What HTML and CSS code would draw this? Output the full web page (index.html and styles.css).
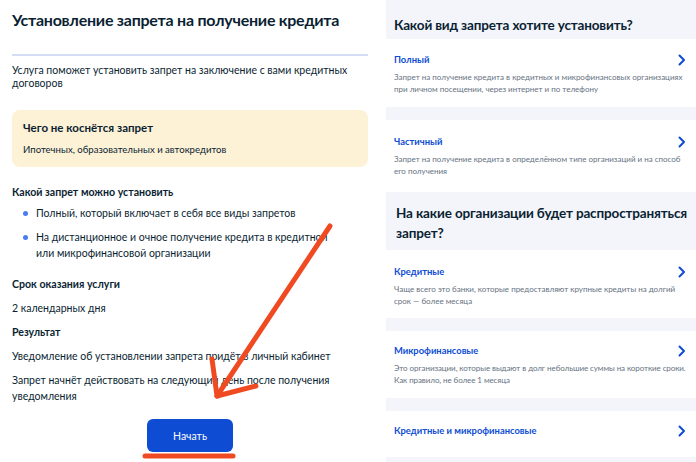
FILE: index.html
```html
<!DOCTYPE html>
<html lang="ru">
<head>
<meta charset="utf-8">
<title>Установление запрета на получение кредита</title>
<link rel="stylesheet" href="styles.css">
</head>
<body>
<div class="page">
  <section class="left">
    <h1 class="title">Установление запрета на получение кредита</h1>
    <div class="divider"></div>
    <p class="intro">Услуга поможет установить запрет на заключение с вами кредитных договоров</p>
    <div class="note">
      <div class="note-title">Чего не коснётся запрет</div>
      <div class="note-text">Ипотечных, образовательных и автокредитов</div>
    </div>
    <div class="label label-first">Какой запрет можно установить</div>
    <ul class="bullets">
      <li>Полный, который включает в себя все виды запретов</li>
      <li>На дистанционное и очное получение кредита в кредитной или микрофинансовой организации</li>
    </ul>
    <div class="label label-term">Срок оказания услуги</div>
    <p class="text">2 календарных дня</p>
    <div class="label">Результат</div>
    <p class="text">Уведомление об установлении запрета придёт в личный кабинет</p>
    <p class="text">Запрет начнёт действовать на следующий день после получения уведомления</p>
    <div class="actions">
      <button class="btn">Начать</button>
    </div>
  </section>
  <div class="spacer"></div>
  <section class="right">
    <h2 class="rtitle rtitle-first">Какой вид запрета хотите установить?</h2>
    <div class="card card-a">
      <div class="card-head"><span class="card-title">Полный</span><svg class="chev" viewBox="0 0 8 12"><path d="M1.5 1.5 L6 6 L1.5 10.5" /></svg></div>
      <div class="card-desc">Запрет на получение кредита в кредитных и микрофинансовых организациях при личном посещении, через интернет и по телефону</div>
    </div>
    <div class="card card-b">
      <div class="card-head"><span class="card-title">Частичный</span><svg class="chev" viewBox="0 0 8 12"><path d="M1.5 1.5 L6 6 L1.5 10.5" /></svg></div>
      <div class="card-desc">Запрет на получение кредита в определённом типе организаций и на способ его получения</div>
    </div>
    <h2 class="rtitle rtitle-second">На какие организации будет распространяться запрет?</h2>
    <div class="card card-c">
      <div class="card-head"><span class="card-title">Кредитные</span><svg class="chev" viewBox="0 0 8 12"><path d="M1.5 1.5 L6 6 L1.5 10.5" /></svg></div>
      <div class="card-desc">Чаще всего это банки, которые предоставляют крупные кредиты на долгий срок — более месяца</div>
    </div>
    <div class="card card-d">
      <div class="card-head"><span class="card-title">Микрофинансовые</span><svg class="chev" viewBox="0 0 8 12"><path d="M1.5 1.5 L6 6 L1.5 10.5" /></svg></div>
      <div class="card-desc card-desc-wide">Это организации, которые выдают в долг небольшие суммы на короткие сроки. Как правило, не более 1 месяца</div>
    </div>
    <div class="card card-e">
      <div class="card-head"><span class="card-title">Кредитные и микрофинансовые</span><svg class="chev" viewBox="0 0 8 12"><path d="M1.5 1.5 L6 6 L1.5 10.5" /></svg></div>
    </div>
  </section>
  <svg class="annot" viewBox="0 0 696 462" width="696" height="462">
    <g stroke="#f04a22" stroke-width="5" stroke-linecap="round" stroke-linejoin="round" fill="none">
      <path d="M330 226 L217 396" />
      <path d="M212 359 L217 396 L256 386" />
      <path d="M145 456 L233 456" />
    </g>
  </svg>
</div>
</body>
</html>
```

FILE: styles.css
```css
* { box-sizing: border-box; }
html, body { margin: 0; padding: 0; }
body {
  width: 696px;
  height: 462px;
  overflow: hidden;
  background: #ffffff;
  font-family: Lato, "Noto Sans", sans-serif;
  color: #0b1f33;
}
.page {
  position: relative;
  display: flex;
  width: 696px;
  height: 462px;
}
.left {
  width: 380px;
  flex: 0 0 380px;
  padding: 0 12px;
  display: flex;
  flex-direction: column;
}
.title {
  margin: 8px 0 0;
  font-size: 16px;
  letter-spacing: -0.25px;
  line-height: 24px;
  font-weight: 700;
  color: #0b1f33;
  white-space: nowrap;
}
.divider {
  margin-top: 22px;
  height: 2px;
  background: #d2ddf3;
}
.intro {
  margin: 8px 0 0;
  font-size: 10.5px;
  line-height: 13px;
  color: #0b1f33;
}
.note {
  margin-top: 20px;
  background: #fdf1d6;
  border-radius: 8px;
  padding: 10px 11px 9px;
}
.note-title {
  font-size: 11.5px;
  line-height: 16px;
  font-weight: 700;
}
.note-text {
  margin-top: 6px;
  font-size: 9.6px;
  line-height: 16px;
}
.label {
  margin-top: 8px;
  font-size: 10.6px;
  line-height: 16px;
  font-weight: 700;
}
.label-first { margin-top: 17px; }
.label-term { margin-top: 15px; }
.bullets {
  list-style: none;
  margin: 5px 0 0;
  padding: 0 26px 0 0;
}
.bullets li {
  position: relative;
  padding-left: 24px;
  font-size: 10.5px;
  line-height: 16px;
  margin-bottom: 8px;
}
.bullets li:last-child { margin-bottom: 0; }
.bullets li::before {
  content: "";
  position: absolute;
  left: 11px;
  top: 6px;
  width: 5px;
  height: 5px;
  border-radius: 50%;
  background: #4a7df0;
}
.text {
  margin: 8px 0 0;
  font-size: 10.5px;
  line-height: 16px;
}
.actions {
  margin-top: 15px;
  display: flex;
  justify-content: center;
}
.btn {
  width: 86px;
  height: 33px;
  border: none;
  border-radius: 6px;
  background: #0d4cd3;
  color: #ffffff;
  font-family: Lato, "Noto Sans", sans-serif;
  font-size: 10.5px;
}
.spacer {
  width: 6px;
  flex: 0 0 6px;
}
.right {
  flex: 1;
  background: #f3f5fa;
  display: flex;
  flex-direction: column;
}
.rtitle {
  margin: 0;
  padding: 0 0 0 8px;
  font-size: 13.5px;
  letter-spacing: -0.15px;
  line-height: 20px;
  font-weight: 700;
  color: #0b1f33;
}
.rtitle-first { margin: 15px 0 4px; }
.rtitle-second { margin: 11px 0 7px; padding-left: 10px; }
.card {
  background: #ffffff;
  padding: 14px 10px 12px 8px;
}
.card + .card { margin-top: 13px; }
.card-a { padding-top: 14px; padding-bottom: 12px; }
.card-b { padding-top: 15px; padding-bottom: 15px; }
.card-c { padding-top: 15px; padding-bottom: 11px; }
.card-d { padding-top: 13px; padding-bottom: 12px; }
.card-e { padding-top: 13px; padding-bottom: 19px; }
.card-head {
  display: flex;
  align-items: center;
  justify-content: space-between;
  height: 14px;
}
.card-title {
  font-size: 9.4px;
  line-height: 14px;
  color: #0d4cd3;
  font-weight: 700;
}
.chev {
  width: 8px;
  height: 12px;
}
.chev path {
  fill: none;
  stroke: #0d4cd3;
  stroke-width: 2;
  stroke-linecap: round;
  stroke-linejoin: round;
}
.card-desc {
  margin-top: 4px;
  font-size: 8px;
  line-height: 12px;
  color: #66727f;
}
.card-desc-wide {
  margin-right: -8px;
  letter-spacing: -0.08px;
}
.annot {
  position: absolute;
  left: 0;
  top: 0;
  pointer-events: none;
}
```
